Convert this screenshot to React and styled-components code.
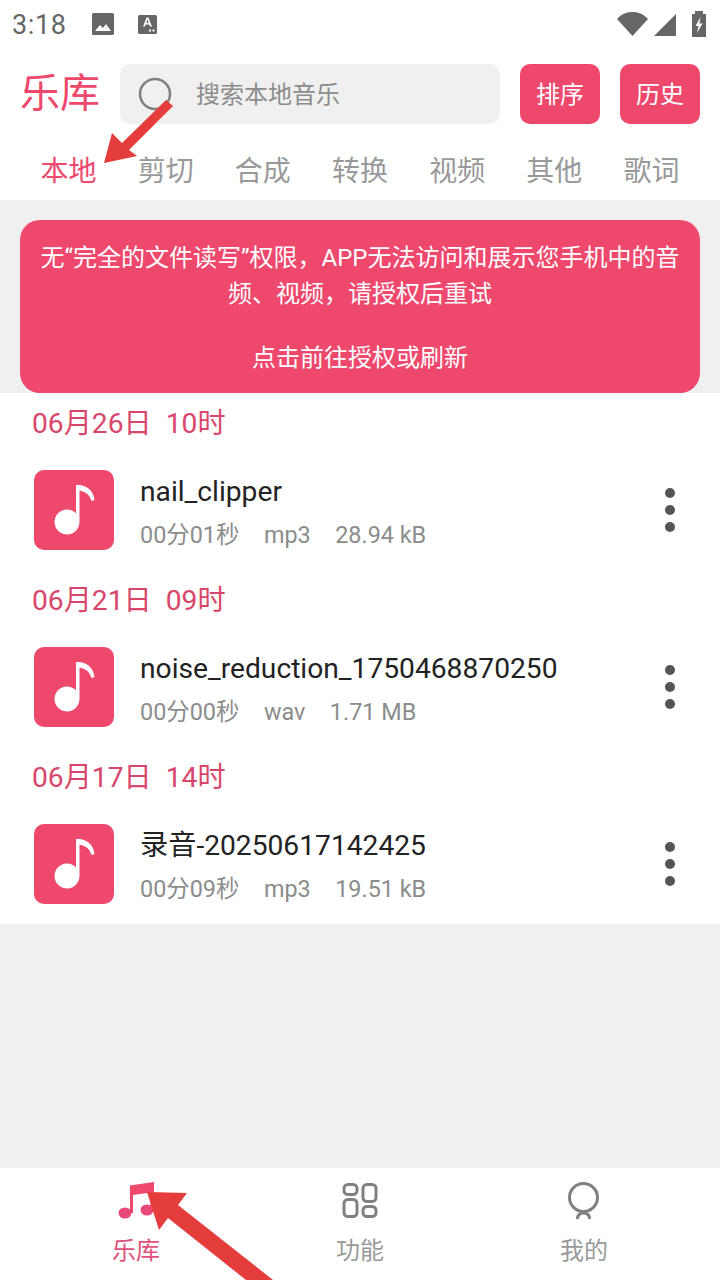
import React from 'react';
import styled, { createGlobalStyle } from 'styled-components';

const PINK = '#ee486c';

const GlobalStyle = createGlobalStyle`
    html, body {
        margin: 0;
        padding: 0;
        background: #f0f0f0;
        font-family: Roboto, "Noto Sans CJK SC", sans-serif;
    }
    * { box-sizing: border-box; }
`

const Page = styled.div`
    position: relative;
    width: 720px;
    height: 1280px;
    overflow: hidden;
    display: flex;
    flex-direction: column;
    background: #f0f0f0;
`

const StatusBar = styled.div`
    height: 48px;
    flex: none;
    background: #fff;
    display: flex;
    align-items: center;
    padding: 0 14px 0 12px;
    color: #666;
    svg { display: block; fill: #666; }
`

const Clock = styled.span`
    font-size: 27px;
    width: 80px;
    margin-top: 2px;
    letter-spacing: 0.6px;
`

const StatusLeft = styled.div`
    display: flex;
    align-items: center;
    gap: 24px;
    flex: 1;
`

const StatusRight = styled.div`
    display: flex;
    align-items: center;
    gap: 6px;
`

const Header = styled.div`
    height: 92px;
    flex: none;
    background: #fff;
    display: flex;
    align-items: flex-start;
    padding: 16px 20px 0 20px;
`

const Title = styled.div`
    width: 100px;
    height: 60px;
    line-height: 60px;
    font-size: 40px;
    color: ${PINK};
`

const Search = styled.div`
    width: 380px;
    height: 60px;
    background: #f0f0f0;
    border-radius: 10px;
    display: flex;
    align-items: center;
    padding: 0 0 4px 18px;
    gap: 24px;
    color: #8c8c8c;
    font-size: 24px;
`

const HeadButton = styled.div`
    width: 80px;
    height: 60px;
    margin-left: 20px;
    padding-bottom: 4px;
    background: ${PINK};
    border-radius: 10px;
    color: #fff;
    font-size: 24px;
    display: flex;
    align-items: center;
    justify-content: center;
`

const Tabs = styled.div`
    height: 60px;
    flex: none;
    background: #fff;
    display: grid;
    grid-template-columns: repeat(7, 1fr);
    padding: 0 20px;
`

const Tab = styled.div`
    font-size: 28px;
    text-align: center;
    line-height: 64px;
    color: ${p => (p.$on ? PINK : '#999')};
`

const Banner = styled.div`
    margin: 20px 20px 0 20px;
    height: 173px;
    flex: none;
    background: ${PINK};
    border-radius: 20px;
    color: #fff;
    font-size: 24px;
    line-height: 36px;
    text-align: center;
    padding: 20px 16px 0 16px;
`

const BannerAction = styled.div`
    margin-top: 28px;
`

const List = styled.div`
    background: #fff;
    flex: none;
`

const DateRow = styled.div`
    height: 60px;
    line-height: 62px;
    padding-left: 32px;
    font-size: 28.2px;
    color: #d9466b;
    white-space: pre;
`

const Item = styled.div`
    height: 117px;
    display: flex;
    align-items: flex-start;
    padding: 17px 0 0 34px;
`

const Cover = styled.div`
    width: 80px;
    height: 80px;
    flex: none;
    background: ${PINK};
    border-radius: 10px;
    svg { display: block; }
`

const Info = styled.div`
    flex: 1;
    margin-left: 26px;
`

const Name = styled.div`
    height: 44px;
    line-height: 44px;
    font-size: 28.2px;
    color: #222;
`

const Meta = styled.div`
    height: 44px;
    line-height: 43px;
    font-size: 23.4px;
    color: #8c8c8c;
    display: flex;
    gap: 24.5px;
`

const More = styled.div`
    width: 10px;
    margin: 18px 45px 0 0;
    display: flex;
    flex-direction: column;
    gap: 7px;
    i {
        display: block;
        width: 10px;
        height: 10px;
        border-radius: 50%;
        background: #555;
    }
`

const Spacer = styled.div`
    flex: 1;
`

const Nav = styled.div`
    height: 112px;
    flex: none;
    background: #fff;
    display: grid;
    grid-template-columns: repeat(3, 224px);
    padding: 0 24px;
`

const NavItem = styled.div`
    display: flex;
    flex-direction: column;
    align-items: center;
    padding-top: 14px;
    font-size: 24px;
    color: ${p => (p.$on ? '#e0507a' : '#999')};
    svg { display: block; }
    span { margin-top: 11px; line-height: 36px; }
`

const Overlay = styled.svg`
    position: absolute;
    left: 0;
    top: 0;
    pointer-events: none;
`

const NoteIcon = () => (
    <svg width="80" height="80" viewBox="0 0 80 80">
        <path d="M42 15h3.500c8 1 14 6 15 15l-3 1c-2-6-5-9-12-10.500V52a12.500 12.500 0 1 1-3.500-8.700z" fill="#fff" />
    </svg>
);

const ITEMS = [
    { date: '06月26日  10时', name: 'nail_clipper', time: '00分01秒', ext: 'mp3', size: '28.94 kB' },
    { date: '06月21日  09时', name: 'noise_reduction_1750468870250', time: '00分00秒', ext: 'wav', size: '1.71 MB' },
    { date: '06月17日  14时', name: '录音-20250617142425', time: '00分09秒', ext: 'mp3', size: '19.51 kB' },
];

const TABS = ['本地', '剪切', '合成', '转换', '视频', '其他', '歌词'];

export default function App() {
    return (
        <Page>
            <GlobalStyle />
            <StatusBar>
                <Clock>3:18</Clock>
                <StatusLeft>
                    <svg width="22" height="22" viewBox="0 0 22 22">
                        <rect width="22" height="22" rx="1.500" />
                        <path d="M3 18l5-6 3 3 3-4 5 7z" fill="#fff" />
                    </svg>
                    <svg width="19" height="19" viewBox="0 0 19 19">
                        <rect width="19" height="19" rx="1.500" />
                        <path d="M5 11.500L8.600 2.500h1.800L14 11.500h-2l-.7-2H7.700l-.7 2zM8.300 8h2.400L9.500 4.500z" fill="#fff" />
                        <rect x="11" y="14.500" width="2" height="2" fill="#fff" />
                        <rect x="14.500" y="14.500" width="2" height="2" fill="#fff" />
                    </svg>
                </StatusLeft>
                <StatusRight>
                    <svg width="31" height="24" viewBox="0 0 31 24">
                        <path d="M0 7C4 2.500 9.500 0 15.500 0S27 2.500 31 7L15.500 24z" />
                    </svg>
                    <svg width="22" height="22" viewBox="0 0 22 22" style={{ marginTop: 2 }}>
                        <path d="M22 0v22H0z" />
                    </svg>
                    <svg width="14" height="26" viewBox="0 0 14 26" style={{ marginLeft: 10 }}>
                        <path d="M3 0h8v3h3v23H0V3h3z" />
                        <path d="M8.500 6L3.500 15h3l-1.500 7L10.500 12.500H7.500z" fill="#fff" />
                    </svg>
                </StatusRight>
            </StatusBar>
            <Header>
                <Title>乐库</Title>
                <Search>
                    <svg width="34" height="36" viewBox="0 0 34 36" style={{ marginTop: 4 }}>
                        <circle cx="17" cy="18" r="15" fill="none" stroke="#808080" strokeWidth="2.500" />
                    </svg>
                    <span>搜索本地音乐</span>
                </Search>
                <HeadButton>排序</HeadButton>
                <HeadButton>历史</HeadButton>
            </Header>
            <Tabs>
                {TABS.map((t, i) => <Tab key={t} $on={i === 0}>{t}</Tab>)}
            </Tabs>
            <Banner>
                无“完全的文件读写”权限，APP无法访问和展示您手机中的音频、视频，请授权后重试
                <BannerAction>点击前往授权或刷新</BannerAction>
            </Banner>
            <List>
                {ITEMS.map(it => (
                    <React.Fragment key={it.name}>
                        <DateRow>{it.date}</DateRow>
                        <Item>
                            <Cover><NoteIcon /></Cover>
                            <Info>
                                <Name>{it.name}</Name>
                                <Meta>
                                    <span>{it.time}</span>
                                    <span>{it.ext}</span>
                                    <span>{it.size}</span>
                                </Meta>
                            </Info>
                            <More><i /><i /><i /></More>
                        </Item>
                    </React.Fragment>
                ))}
            </List>
            <Spacer />
            <Nav>
                <NavItem $on>
                    <svg width="40" height="40" viewBox="0 0 40 40">
                        <path d="M14 3.500L38 0v10L17 13V31h-3z" fill="#ee486c" />
                        <ellipse cx="9" cy="31" rx="6.500" ry="5.500" fill="#e9487a" />
                        <ellipse cx="31" cy="28" rx="6.500" ry="5.500" fill="#e9487a" />
                        <path d="M34.500 8h3v20h-3z" fill="#ee486c" />
                    </svg>
                    <span>乐库</span>
                </NavItem>
                <NavItem>
                    <svg width="40" height="40" viewBox="0 0 36 40">
                        <g fill="none" stroke="#808080" strokeWidth="3">
                            <rect x="2" y="2.500" width="13" height="10" rx="4" />
                            <rect x="2" y="17.500" width="13" height="17" rx="4" />
                            <rect x="21" y="2.500" width="13" height="17" rx="4" />
                            <rect x="21" y="24.500" width="13" height="10" rx="4" />
                        </g>
                    </svg>
                    <span>功能</span>
                </NavItem>
                <NavItem>
                    <svg width="40" height="40" viewBox="0 0 40 40">
                        <g fill="none" stroke="#808080" strokeWidth="3">
                            <circle cx="19.500" cy="15.500" r="14" />
                            <path d="M13.500 37c0-4 2.500-6 6-6s6 2 6 6" />
                        </g>
                    </svg>
                    <span>我的</span>
                </NavItem>
            </Nav>
            <Overlay width="720" height="1280" viewBox="0 0 720 1280">
                <path d="M104 163L112 133L122 143L166 100L173 106L129 150L137 156Z" fill="#e53c3c" />
                <path d="M147 1192L187 1193L178 1205L273 1280H246L168 1218L159 1230Z" fill="#e53c3c" />
            </Overlay>
        </Page>
    );
}
